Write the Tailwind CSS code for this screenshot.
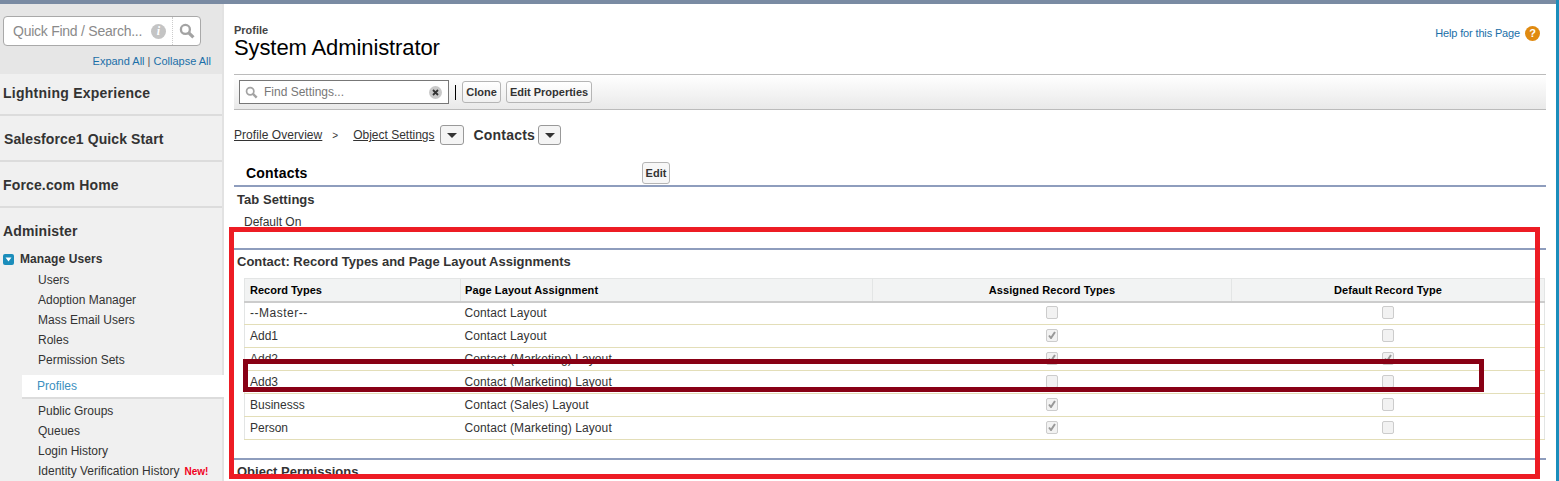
<!DOCTYPE html>
<html lang="en">
<head>
    <meta charset="UTF-8">
    <title>Profile: System Administrator</title>
    <script src="https://cdn.jsdelivr.net/npm/@tailwindcss/browser@4"></script>
</head>
<body class="relative h-[481px] w-[1559px] overflow-hidden bg-white font-['Liberation_Sans',Arial,sans-serif] text-[12px] text-[#333]">
    <div class="flex h-full flex-col pr-[3px]">
        <div class="h-[4px] shrink-0 bg-[#7a8ba3]"></div>
        <div class="flex min-h-0 flex-1">

            <!-- Sidebar -->
            <aside class="w-[224px] shrink-0 border-r-2 border-[#e2e2e2] bg-[#f0f0f0]">
                <div class="h-[70px] bg-[#e6e6e6] pt-[12px] pl-[3px]">
                    <div class="flex h-[30px] w-[198px] items-center rounded-[4px] border border-[#a9a9a9] bg-white">
                        <span class="ml-[9px] flex-1 pt-[1px] text-[14px] tracking-[-0.25px] text-[#8a8a8a]">Quick Find / Search...</span>
                        <span class="mr-[6px] flex h-[15px] w-[15px] items-center justify-center rounded-full bg-[#c4c4c4] font-['Liberation_Serif',serif] text-[12px] font-bold italic text-white">i</span>
                        <span class="flex h-full w-[28px] items-center justify-center border-l border-dotted border-[#ccc]">
                            <svg width="16" height="16" viewBox="0 0 15 15" fill="none" stroke="#a3a3a3"><circle cx="6" cy="6" r="4.2" stroke-width="2.2"/><path d="M9.2 9.2 13.5 13.5" stroke-width="3"/></svg>
                        </span>
                    </div>
                    <div class="mt-[7px] pr-[11px] text-right text-[11px] text-[#1b6fa8]">Expand All <span class="text-[#555]">|</span> Collapse All</div>
                </div>
                <div class="flex h-[42px] items-center border-b-2 border-[#dcdcdc] pb-[2px] pl-[3px] text-[14px] font-bold tracking-[0.25px]">Lightning Experience</div>
                <div class="flex h-[46px] items-center border-b-2 border-[#dcdcdc] pt-[2px] pl-[4px] text-[14px] font-bold tracking-[0.1px]">Salesforce1 Quick Start</div>
                <div class="flex h-[46px] items-center border-b-2 border-[#dcdcdc] pt-[2px] pl-[3px] text-[14px] font-bold tracking-[0.15px]">Force.com Home</div>
                <div class="flex h-[44px] items-center pt-[2px] pl-[3px] text-[14px] font-bold tracking-[0.15px]">Administer</div>
                <div class="flex h-[14px] items-center pl-[3px] font-bold tracking-[0.1px]">
                    <span class="mr-[6px] flex h-[11px] w-[11px] items-center justify-center rounded-[2px] bg-[#1b8dbb]">
                        <svg width="7" height="5" viewBox="0 0 7 5"><path d="M0.5 0.5H6.5L3.5 4.5Z" fill="#fff"/></svg>
                    </span>
                    Manage Users
                </div>
                <ul class="mt-[4px]">
                    <li class="flex h-[20px] items-center pl-[38px]">Users</li>
                    <li class="flex h-[20px] items-center pl-[38px]">Adoption Manager</li>
                    <li class="flex h-[20px] items-center pl-[38px]">Mass Email Users</li>
                    <li class="flex h-[20px] items-center pl-[38px]">Roles</li>
                    <li class="flex h-[20px] items-center pl-[38px]">Permission Sets</li>
                    <li class="mt-[5px] mb-[2px] -mr-[2px] ml-[22px] flex h-[24px] items-center border-b-2 border-[#dcdcdc] bg-white pl-[15px] text-[#3b8fc0]">Profiles</li>
                    <li class="flex h-[20px] items-center pl-[38px]">Public Groups</li>
                    <li class="flex h-[20px] items-center pl-[38px]">Queues</li>
                    <li class="flex h-[20px] items-center pl-[38px]">Login History</li>
                    <li class="flex h-[20px] items-center pl-[38px]">Identity Verification History <span class="ml-[5px] text-[10px] font-bold text-[#f0001c]">New!</span></li>
                </ul>
            </aside>

            <!-- Main -->
            <main class="min-w-0 flex-1 pr-[10px] pl-[10px]">
                <div class="flex h-[70px] items-start justify-between">
                    <div class="pt-[21px]">
                        <div class="text-[11px] leading-[11px] font-bold text-[#444]">Profile</div>
                        <h1 class="text-[22px] leading-[23px] tracking-[-0.1px] text-black">System Administrator</h1>
                    </div>
                    <div class="mt-[21px] mr-[6px] flex items-center">
                        <span class="text-[11px] tracking-[-0.15px] text-[#1b6fa8]">Help for this Page</span>
                        <span class="ml-[5px] flex h-[15px] w-[15px] items-center justify-center rounded-full bg-[#e08a10] text-[11px] font-bold text-white">?</span>
                    </div>
                </div>

                <div class="flex h-[36px] items-center border-y border-[#bbb] bg-gradient-to-b from-white to-[#e9e9e9] pl-[5px]">
                    <div class="flex h-[24px] w-[210px] items-center border border-[#777] bg-white">
                        <svg class="mr-[6px] ml-[5px]" width="13" height="13" viewBox="0 0 15 15" fill="none" stroke="#a3a3a3"><circle cx="6" cy="6" r="4.2" stroke-width="2"/><path d="M9.2 9.2 13.5 13.5" stroke-width="2.8"/></svg>
                        <span class="flex-1 text-[12px] text-[#777]">Find Settings...</span>
                        <span class="mr-[6px] flex h-[13px] w-[13px] items-center justify-center rounded-full bg-[#c9c9c9]">
                            <svg width="7" height="7" viewBox="0 0 7 7"><path d="M1 1 6 6M6 1 1 6" stroke="#333" stroke-width="1.8"/></svg>
                        </span>
                    </div>
                    <span class="mx-[6px] h-[15px] w-px bg-black"></span>
                    <button class="flex h-[22px] w-[39px] items-center justify-center rounded-[3px] border border-[#b5b5b5] bg-gradient-to-b from-white to-[#f0f0f0] text-[11px] font-bold">Clone</button>
                    <button class="ml-[5px] flex h-[22px] w-[86px] items-center justify-center rounded-[3px] border border-[#b5b5b5] bg-gradient-to-b from-white to-[#f0f0f0] text-[11px] font-bold">Edit Properties</button>
                </div>

                <div class="mt-[15px] flex h-[20px] items-center">
                    <span class="tracking-[0.06px] underline">Profile Overview</span>
                    <span class="mx-[10px] text-[10px]">&gt;</span>
                    <span class="ml-[5px] underline">Object Settings</span>
                    <button class="ml-[5px] flex h-[20px] w-[24px] items-center justify-center rounded-[3px] border border-[#999] bg-[#f4f4f4]">
                        <svg width="10" height="5" viewBox="0 0 10 5"><path d="M0 0H10L5 5Z" fill="#333"/></svg>
                    </button>
                    <span class="ml-[10px] text-[14px] font-bold tracking-[0.2px]">Contacts</span>
                    <button class="ml-[3px] flex h-[20px] w-[23px] items-center justify-center rounded-[3px] border border-[#999] bg-[#f4f4f4]">
                        <svg width="10" height="5" viewBox="0 0 10 5"><path d="M0 0H10L5 5Z" fill="#333"/></svg>
                    </button>
                </div>

                <div class="mt-[16px] flex h-[26px] items-center border-b-2 border-[#8e9dbd] pl-[12px]">
                    <span class="w-[396px] text-[14px] font-bold tracking-[0.2px] text-black">Contacts</span>
                    <button class="flex h-[22px] w-[28px] items-center justify-center rounded-[3px] border border-[#b5b5b5] bg-[#f7f7f7] text-[11px] font-bold">Edit</button>
                </div>
                <h2 class="mt-[3px] pl-[3px] text-[13px] leading-[20px] font-bold tracking-[0.05px]">Tab Settings</h2>
                <p class="mt-[4px] pl-[10px] leading-[16px]">Default On</p>
                <div class="mt-[18px] h-[2px] bg-[#8e9dbd]"></div>

                <h2 class="mt-[2px] pl-[3px] text-[13px] leading-[20px] font-bold">Contact: Record Types and Page Layout Assignments</h2>

                <table class="mt-[6px] ml-[10px] w-[1300px] table-fixed border border-[#e3e5e5] border-b-[#e3deb8] border-collapse">
                    <colgroup>
                        <col class="w-[216px]"><col class="w-[412px]"><col class="w-[359px]"><col class="w-[313px]">
                    </colgroup>
                    <thead>
                        <tr class="h-[23px] border-b-2 border-[#ccc] bg-[#f2f3f3] text-[11px] text-black">
                            <th class="border-r border-[#e3e5e5] pt-[1px] pl-[5px] text-left">Record Types</th>
                            <th class="border-r border-[#e3e5e5] pt-[1px] pl-[4px] text-left tracking-[0.1px]">Page Layout Assignment</th>
                            <th class="border-r border-[#e3e5e5] pt-[1px] text-center tracking-[0.1px]">Assigned Record Types</th>
                            <th class="pt-[1px] text-center tracking-[0.1px]">Default Record Type</th>
                        </tr>
                    </thead>
                    <tbody>
                        <tr class="h-[23px] border-b border-[#e3deb8]">
                            <td class="pl-[5px] tracking-[0.5px]">--Master--</td><td class="pl-[4px] tracking-[0.1px]">Contact Layout</td>
                            <td><span class="mx-auto mb-[2px] block h-[13px] w-[12px] rounded-[2px] border border-[#ccc] bg-[#f2f2f2]"></span></td>
                            <td><span class="mx-auto mb-[2px] block h-[13px] w-[12px] rounded-[2px] border border-[#ccc] bg-[#f2f2f2]"></span></td>
                        </tr>
                        <tr class="h-[23px] border-b border-[#e3deb8]">
                            <td class="pl-[5px]">Add1</td><td class="pl-[4px] tracking-[0.1px]">Contact Layout</td>
                            <td><span class="mx-auto mb-[2px] flex h-[13px] w-[12px] items-center justify-center rounded-[2px] border border-[#ccc] bg-[#f2f2f2]"><svg width="8" height="8" viewBox="0 0 8 8"><path d="M1 4.5 3 7 7 1" fill="none" stroke="#999" stroke-width="2"/></svg></span></td>
                            <td><span class="mx-auto mb-[2px] block h-[13px] w-[12px] rounded-[2px] border border-[#ccc] bg-[#f2f2f2]"></span></td>
                        </tr>
                        <tr class="h-[23px] border-b border-[#e3deb8]">
                            <td class="pl-[5px]">Add2</td><td class="pl-[4px] tracking-[0.1px]">Contact (Marketing) Layout</td>
                            <td><span class="mx-auto mb-[2px] flex h-[13px] w-[12px] items-center justify-center rounded-[2px] border border-[#ccc] bg-[#f2f2f2]"><svg width="8" height="8" viewBox="0 0 8 8"><path d="M1 4.5 3 7 7 1" fill="none" stroke="#999" stroke-width="2"/></svg></span></td>
                            <td><span class="mx-auto mb-[2px] flex h-[13px] w-[12px] items-center justify-center rounded-[2px] border border-[#ccc] bg-[#f2f2f2]"><svg width="8" height="8" viewBox="0 0 8 8"><path d="M1 4.5 3 7 7 1" fill="none" stroke="#999" stroke-width="2"/></svg></span></td>
                        </tr>
                        <tr class="h-[23px] border-b border-[#e3deb8]">
                            <td class="pl-[5px]">Add3</td><td class="pl-[4px] tracking-[0.1px]">Contact (Marketing) Layout</td>
                            <td><span class="mx-auto mb-[2px] block h-[13px] w-[12px] rounded-[2px] border border-[#ccc] bg-[#f2f2f2]"></span></td>
                            <td><span class="mx-auto mb-[2px] block h-[13px] w-[12px] rounded-[2px] border border-[#ccc] bg-[#f2f2f2]"></span></td>
                        </tr>
                        <tr class="h-[23px] border-b border-[#e3deb8]">
                            <td class="pl-[5px]">Businesss</td><td class="pl-[4px] tracking-[0.1px]">Contact (Sales) Layout</td>
                            <td><span class="mx-auto mb-[2px] flex h-[13px] w-[12px] items-center justify-center rounded-[2px] border border-[#ccc] bg-[#f2f2f2]"><svg width="8" height="8" viewBox="0 0 8 8"><path d="M1 4.5 3 7 7 1" fill="none" stroke="#999" stroke-width="2"/></svg></span></td>
                            <td><span class="mx-auto mb-[2px] block h-[13px] w-[12px] rounded-[2px] border border-[#ccc] bg-[#f2f2f2]"></span></td>
                        </tr>
                        <tr class="h-[23px] border-b border-[#e3deb8]">
                            <td class="pl-[5px]">Person</td><td class="pl-[4px] tracking-[0.1px]">Contact (Marketing) Layout</td>
                            <td><span class="mx-auto mb-[2px] flex h-[13px] w-[12px] items-center justify-center rounded-[2px] border border-[#ccc] bg-[#f2f2f2]"><svg width="8" height="8" viewBox="0 0 8 8"><path d="M1 4.5 3 7 7 1" fill="none" stroke="#999" stroke-width="2"/></svg></span></td>
                            <td><span class="mx-auto mb-[2px] block h-[13px] w-[12px] rounded-[2px] border border-[#ccc] bg-[#f2f2f2]"></span></td>
                        </tr>
                    </tbody>
                </table>

                <div class="mt-[18px] h-[2px] bg-[#8e9dbd]"></div>
                <h2 class="mt-[2px] pl-[3px] text-[13px] leading-[20px] font-bold">Object Permissions</h2>
            </main>
        </div>
    </div>
    <div class="absolute top-0 right-0 h-full w-[3px] bg-[#1b8dbb]"></div>

    <!-- annotation boxes drawn over the screenshot -->
    <div class="absolute top-[227px] left-[229px] h-[252px] w-[1311px] border-[5px] border-[#ed1c24]"></div>
    <div class="absolute top-[359px] left-[243px] h-[33px] w-[1241px] border-[5px] border-[#880015]"></div>
</body>
</html>
